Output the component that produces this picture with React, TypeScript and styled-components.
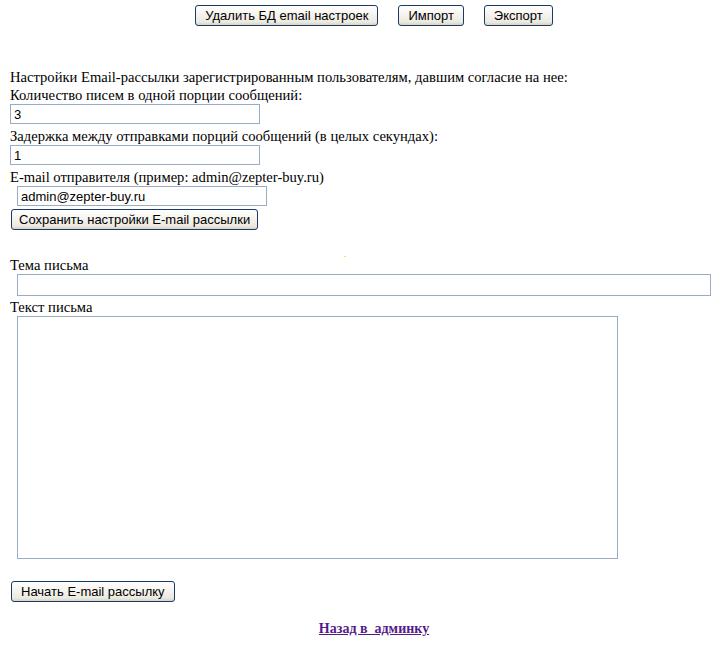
import React, { useState } from 'react'
import styled, { createGlobalStyle } from 'styled-components'

const GlobalStyle = createGlobalStyle`
    html, body {
        margin: 0;
        padding: 0;
        background: #ffffff;
    }
    body {
        font-family: "Liberation Serif", "Times New Roman", serif;
        font-size: 14.6px;
        color: #000000;
    }
`

function App() {
    const [settings, setSettings] = useState({
        portion: "3",
        delay: "1",
        sender: "admin@zepter-buy.ru",
    })
    const [subject, setSubject] = useState("")
    const [body, setBody] = useState("")

    const handleChange = (event: React.ChangeEvent<HTMLInputElement>) => {
        setSettings({
            ...settings,
            [event.target.name]: event.target.value
        })
    }

    return (
        <>
            <GlobalStyle />
            <Page>
                <TopBar>
                    <XpButton type="button">Удалить БД email настроек</XpButton>
                    <XpButton type="button">Импорт</XpButton>
                    <XpButton type="button">Экспорт</XpButton>
                </TopBar>

                <SettingsForm>
                    <Label>Настройки Email-рассылки зарегистрированным пользователям, давшим согласие на нее:</Label>
                    <Label>Количество писем в одной порции сообщений:</Label>
                    <TextInput name="portion" value={settings.portion} onChange={handleChange} />
                    <Label>Задержка между отправками порций сообщений (в целых секундах):</Label>
                    <TextInput name="delay" value={settings.delay} onChange={handleChange} />
                    <Label>E-mail отправителя (пример: admin@zepter-buy.ru)</Label>
                    <TextInput $indent name="sender" value={settings.sender} onChange={handleChange} />
                    <SaveRow>
                        <XpButton type="button" $wide>Сохранить настройки E-mail рассылки</XpButton>
                    </SaveRow>
                </SettingsForm>

                <DotRow>
                    <Dot />
                </DotRow>

                <MailForm>
                    <Label>Тема письма</Label>
                    <SubjectInput value={subject} onChange={(e) => setSubject(e.target.value)} />
                    <Label>Текст письма</Label>
                    <BodyArea value={body} onChange={(e) => setBody(e.target.value)} />
                    <StartRow>
                        <XpButton type="button">Начать E-mail рассылку</XpButton>
                    </StartRow>
                </MailForm>

                <FooterRow>
                    <BackLink href="#">Назад в&nbsp; админку</BackLink>
                </FooterRow>
            </Page>
        </>
    )
}

export default App

const Page = styled.div`
    width: 720px;
    height: 650px;
    padding-top: 5px;
    box-sizing: border-box;
    overflow: hidden;
`

const TopBar = styled.div`
    display: flex;
    justify-content: center;
    gap: 20px;
    padding-left: 28px;
`

const XpButton = styled.button<{ $wide?: boolean }>`
    height: 21px;
    padding: 0 ${(p) => (p.$wide ? "7px" : "9px")};
    border: 1px solid #1c3a66;
    border-radius: 3px;
    background: linear-gradient(#ffffff 0%, #f6f5f0 40%, #ebe9e0 85%, #d6d2c2 100%);
    font-family: "Liberation Sans", Arial, sans-serif;
    font-size: 13px;
    color: #000000;
    line-height: 19px;
    box-sizing: border-box;
    cursor: pointer;
`

const SettingsForm = styled.div`
    display: flex;
    flex-direction: column;
    align-items: flex-start;
    padding: 42px 10px 0 10px;
`

const Label = styled.div`
    line-height: 18px;
    height: 18px;
    white-space: nowrap;
`

const TextInput = styled.input<{ $indent?: boolean }>`
    width: 250px;
    height: 20px;
    margin: 0 0 3px ${(p) => (p.$indent ? "7px" : "0")};
    padding: 0 3px;
    border: 1px solid #98acc6;
    box-sizing: border-box;
    font-family: "Liberation Sans", Arial, sans-serif;
    font-size: 13px;
    color: #000000;
    outline: none;
`

const SaveRow = styled.div`
    padding-left: 1px;
`

const DotRow = styled.div`
    height: 26px;
    position: relative;
`

const Dot = styled.span`
    position: absolute;
    left: 344px;
    top: 26px;
    width: 2px;
    height: 1px;
    background: #e8e85a;
`

const MailForm = styled.div`
    display: flex;
    flex-direction: column;
    align-items: flex-start;
    padding: 0 10px;
`

const SubjectInput = styled.input`
    width: 694px;
    height: 22px;
    margin: 0 0 2px 7px;
    padding: 0 3px;
    border: 1px solid #98acc6;
    box-sizing: border-box;
    font-family: "Liberation Sans", Arial, sans-serif;
    font-size: 13px;
    outline: none;
`

const BodyArea = styled.textarea`
    display: block;
    width: 601px;
    height: 243px;
    margin: 0 0 0 7px;
    padding: 2px;
    border: 1px solid #98acc6;
    box-sizing: border-box;
    resize: none;
    font-family: "Liberation Sans", Arial, sans-serif;
    font-size: 13px;
    outline: none;
`

const StartRow = styled.div`
    padding: 22px 0 0 1px;
`

const FooterRow = styled.div`
    display: flex;
    justify-content: center;
    padding: 19px 0 0 28px;
`

const BackLink = styled.a`
    font-family: "Liberation Serif", "Times New Roman", serif;
    font-size: 14px;
    font-weight: bold;
    color: #551a8b;
    text-decoration: underline;
`
